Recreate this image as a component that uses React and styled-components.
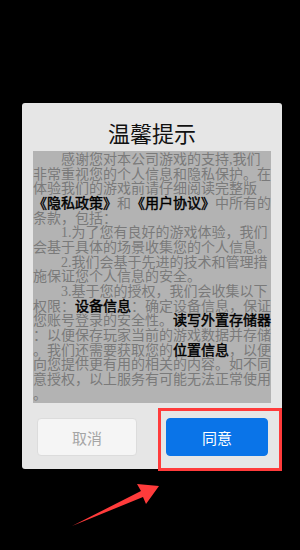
import React from "react";
import styled, { createGlobalStyle } from "styled-components";

const GlobalStyle = createGlobalStyle`
  html, body {
    margin: 0;
    padding: 0;
    background: #000;
  }
  body {
    font-family: "Noto Sans CJK SC", "Noto Sans", sans-serif;
  }
`;

const Screen = styled.div`
  position: relative;
  width: 300px;
  height: 550px;
  background: #000;
  padding: 103px 0 0 22px;
  box-sizing: border-box;
  overflow: hidden;
`;

const Dialog = styled.div`
  position: relative;
  width: 260px;
  box-sizing: border-box;
  background: #e6e6e6;
  border-radius: 3px;
  padding: 0 11px 13px;
`;

const Title = styled.h2`
  margin: 0 0 4px;
  padding-top: 14px;
  font-size: 22px;
  line-height: 30px;
  font-weight: 400;
  color: #111;
  text-align: center;
`;

const Terms = styled.div`
  width: 238px;
  height: 252px;
  box-sizing: border-box;
  padding-top: 2px;
  background: #b3b3b3;
  font-family: "Liberation Serif", "Noto Sans CJK SC", serif;
  font-size: 14px;
  font-weight: 400;
  color: #7a7a7a;
`;

const Line = styled.div`
  height: 14.67px;
  line-height: 14.67px;
  white-space: nowrap;
  text-indent: ${({ $indent }) => ($indent ? "2em" : "0")};
`;

// same face as the body text, thickened with a stroke so the metrics match
const Em = styled.span`
  color: #000;
  -webkit-text-stroke: 0.45px #000;
`;

const ButtonRow = styled.div`
  display: flex;
  justify-content: space-between;
  margin-top: 15px;
  padding: 0 3px 0 4px;
`;

const Button = styled.button`
  width: ${({ $primary }) => ($primary ? "102px" : "100px")};
  height: 38px;
  border-radius: 4px;
  border: 1px solid ${({ $primary }) => ($primary ? "#0a74e8" : "#dcdcdc")};
  background: ${({ $primary }) => ($primary ? "#0a74e8" : "#f5f5f5")};
  color: ${({ $primary }) => ($primary ? "#fff" : "#a5a5a5")};
  font-family: "Noto Sans CJK SC", sans-serif;
  font-size: 15px;
  padding: 0;
  cursor: pointer;
`;

const Highlight = styled.div`
  position: absolute;
  left: 136px;
  top: 305px;
  width: 124px;
  height: 63px;
  box-sizing: border-box;
  border: 3px solid #ff3b3b;
  pointer-events: none;
`;

const Arrow = styled.svg`
  position: absolute;
  left: 0;
  top: 0;
  pointer-events: none;
`;

const App = () => (
  <>
    <GlobalStyle />
    <Screen>
      <Dialog>
        <Title>温馨提示</Title>
        <Terms>
          <Line $indent>感谢您对本公司游戏的支持,我们</Line>
          <Line>非常重视您的个人信息和隐私保护。在</Line>
          <Line>体验我们的游戏前请仔细阅读完整版</Line>
          <Line>
            <Em>《隐私政策》</Em>和<Em>《用户协议》</Em>中所有的
          </Line>
          <Line>条款，包括：</Line>
          <Line $indent>1.为了您有良好的游戏体验，我们</Line>
          <Line>会基于具体的场景收集您的个人信息。</Line>
          <Line $indent>2.我们会基于先进的技术和管理措</Line>
          <Line>施保证您个人信息的安全。</Line>
          <Line $indent>3.基于您的授权，我们会收集以下</Line>
          <Line>
            权限：<Em>设备信息</Em>：确定设备信息，保证
          </Line>
          <Line>
            您账号登录的安全性。<Em>读写外置存储器</Em>
          </Line>
          <Line>：以便保存玩家当前的游戏数据并存储</Line>
          <Line>
            。我们还需要获取您的<Em>位置信息</Em>，以便
          </Line>
          <Line>向您提供更有用的相关的内容。如不同</Line>
          <Line>意授权，以上服务有可能无法正常使用</Line>
          <Line>。</Line>
        </Terms>
        <ButtonRow>
          <Button>取消</Button>
          <Button $primary>同意</Button>
        </ButtonRow>
        <Highlight />
      </Dialog>
      <Arrow width="300" height="550" viewBox="0 0 300 550">
        <polygon
          points="72,526 141,491 137,484 159,486 146,504 143,497"
          fill="#ff3b3b"
        />
      </Arrow>
    </Screen>
  </>
);

export default App;
